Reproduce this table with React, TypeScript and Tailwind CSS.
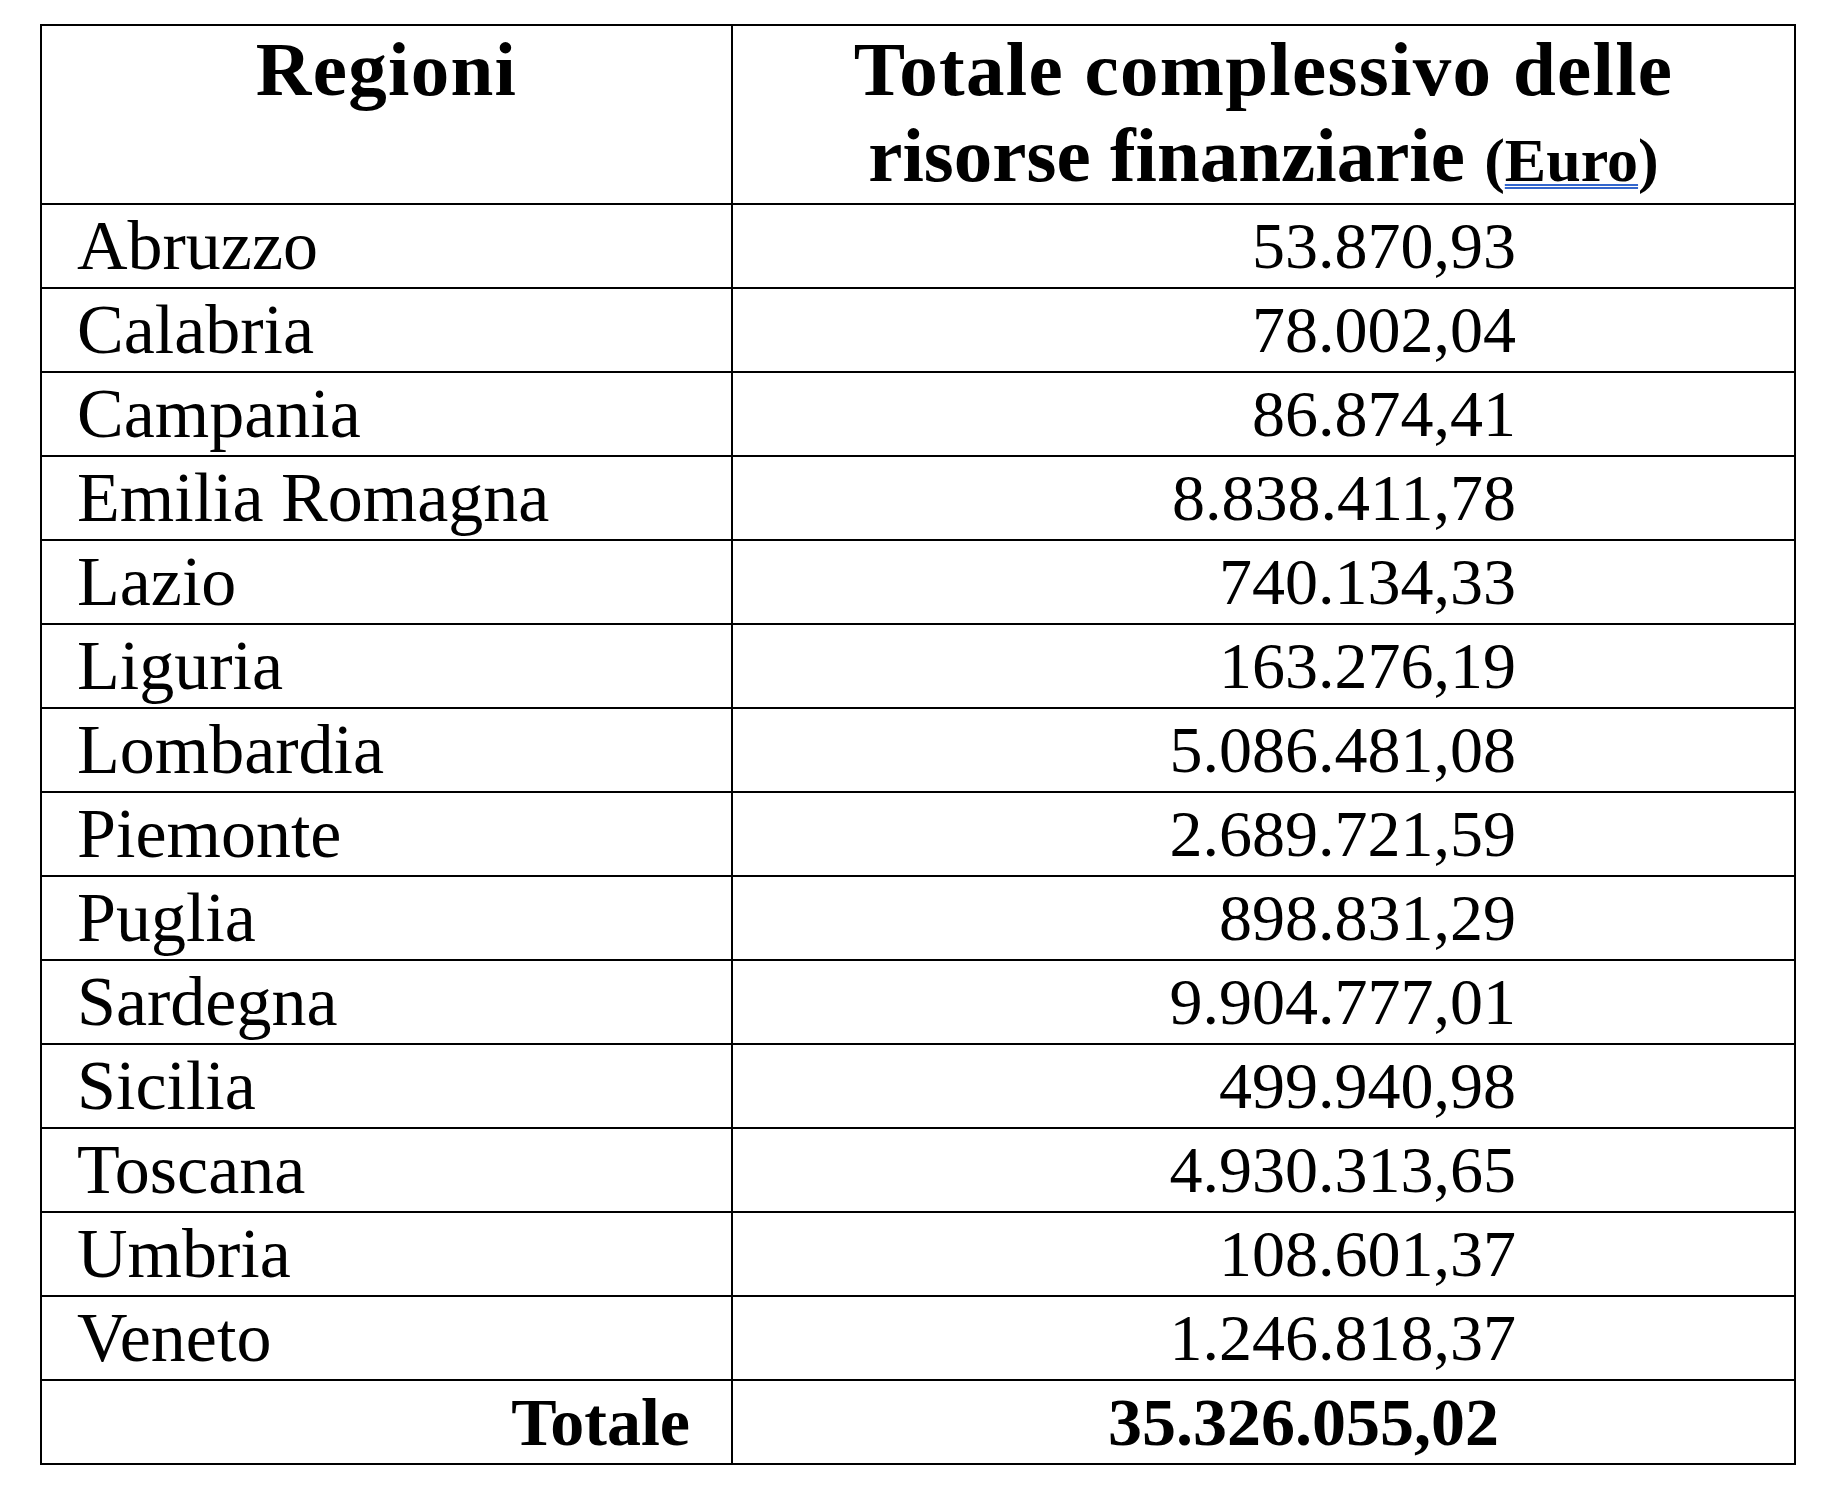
import React from "react";

const rows: [string, string][] = [
  ["Abruzzo", "53.870,93"],
  ["Calabria", "78.002,04"],
  ["Campania", "86.874,41"],
  ["Emilia Romagna", "8.838.411,78"],
  ["Lazio", "740.134,33"],
  ["Liguria", "163.276,19"],
  ["Lombardia", "5.086.481,08"],
  ["Piemonte", "2.689.721,59"],
  ["Puglia", "898.831,29"],
  ["Sardegna", "9.904.777,01"],
  ["Sicilia", "499.940,98"],
  ["Toscana", "4.930.313,65"],
  ["Umbria", "108.601,37"],
  ["Veneto", "1.246.818,37"],
];

export default function App() {
  return (
    <div className="min-h-[1486px] w-full bg-white pt-[24px] pl-[40px] text-black [font-family:'Liberation_Serif','Times_New_Roman',serif]">
      <div className="w-[1756px] border-2 border-black">
        {/* Header */}
        <div className="flex h-[179px] border-b-2 border-black font-bold text-[77px] leading-[86px]">
          <div className="w-[691px] shrink-0 border-r-2 border-black text-center tracking-[1.3px]">Regioni</div>
          <div className="flex-1 text-center">
            <div className="tracking-[1.3px]">Totale complessivo delle</div>
            <div>
              risorse finanziarie{" "}
              <span className="text-[62px]">
                (
                <span className="underline decoration-double decoration-[#3366cc] decoration-2 underline-offset-[3px]">
                  Euro
                </span>
                )
              </span>
            </div>
          </div>
        </div>
        {rows.map(([name, val]) => (
          <div key={name} className="flex h-[84px] border-b-2 border-black leading-[82px]">
            <div className="w-[691px] shrink-0 border-r-2 border-black pl-[35px] text-[70px]">{name}</div>
            <div className="flex-1 pr-[278px] text-right text-[66px]">{val}</div>
          </div>
        ))}
        <div className="flex h-[82px] text-[68px] leading-[82px] font-bold">
          <div className="w-[691px] shrink-0 border-r-2 border-black pr-[41px] text-right">Totale</div>
          <div className="flex-1 pr-[295px] text-right">35.326.055,02</div>
        </div>
      </div>
    </div>
  );
}
